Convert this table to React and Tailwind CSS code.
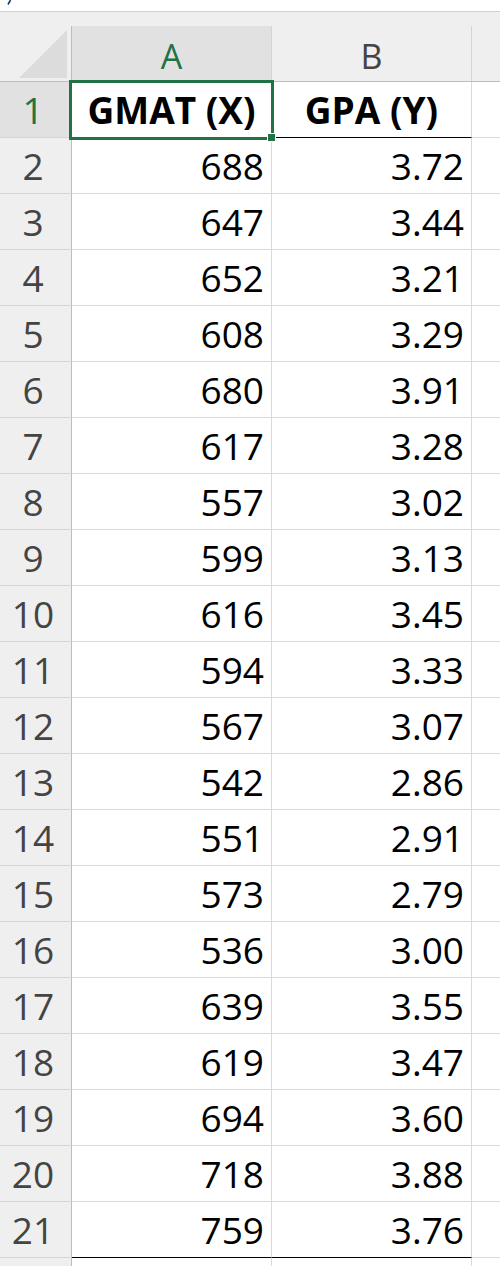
// Hoja de cálculo: GMAT vs GPA
import React from 'react';

const rows = [
  ['688', '3.72'],
  ['647', '3.44'],
  ['652', '3.21'],
  ['608', '3.29'],
  ['680', '3.91'],
  ['617', '3.28'],
  ['557', '3.02'],
  ['599', '3.13'],
  ['616', '3.45'],
  ['594', '3.33'],
  ['567', '3.07'],
  ['542', '2.86'],
  ['551', '2.91'],
  ['573', '2.79'],
  ['536', '3.00'],
  ['639', '3.55'],
  ['619', '3.47'],
  ['694', '3.60'],
  ['718', '3.88'],
  ['759', '3.76'],
];

const font = { fontFamily: '"Open Sans", "Liberation Sans", sans-serif' };

function RowHeader({ n, active }) {
  return (
    <div
      className={
        'w-[72px] shrink-0 flex items-center justify-center pr-[5px] border-r border-r-[#bdbdbd] border-b border-b-[#d4d4d4] text-[37px] leading-none ' +
        (active ? 'bg-[#e1e1e1] text-[#217346]' : 'bg-[#efefef] text-[#444444]')
      }
    >
      {n}
    </div>
  );
}

export default function App() {
  return (
    <div className="w-[500px] h-[1266px] bg-white overflow-hidden" style={font}>
      {/* Resto de la barra de fórmulas */}
      <div className="h-[12px] border-b border-[#d0d0d0] bg-white">
        <svg width="12" height="11" className="ml-[3px]">
          <line x1="5" y1="4.5" x2="7.5" y2="0" stroke="#1a3a6a" strokeWidth="1.6" />
        </svg>
      </div>

      {/* Cabecera de columnas */}
      <div className="h-[70px] flex flex-col bg-[#efefef] border-b border-[#bdbdbd]">
        <div className="h-[14px]" />
        <div className="flex flex-1">
          <div className="w-[72px] shrink-0 border-r border-[#bdbdbd] flex items-end justify-end pr-[3px] pb-[3px]">
            <svg width="49" height="48">
              <polygon points="48,0 48,48 0,48" fill="#dcdcdc" />
            </svg>
          </div>
          <div className="w-[200px] shrink-0 border-r border-[#d4d4d4] bg-[#e1e1e1] flex items-center justify-center pt-[5px] text-[34px] leading-none text-[#217346]">
            A
          </div>
          <div className="w-[200px] shrink-0 border-r border-[#d4d4d4] flex items-center justify-center pt-[5px] text-[34px] leading-none text-[#444444]">
            B
          </div>
          <div className="flex-1" />
        </div>
      </div>

      {/* Fila 1: encabezados */}
      <div className="h-[56px] flex">
        <RowHeader n={1} active />
        <div className="relative w-[200px] shrink-0 border-r border-r-[#dadada] border-b border-b-[#dadada] flex items-center justify-center text-[37px] font-bold leading-none text-black">
          GMAT (X)
          <div className="absolute -left-[3px] -top-[2px] w-[205px] h-[60px] border-[3px] border-[#217346] z-10" />
          <div className="absolute left-[195px] top-[51px] w-[9px] h-[9px] bg-[#217346] border border-white z-20" />
        </div>
        <div className="w-[200px] shrink-0 border-r border-r-[#dadada] border-b border-b-black flex items-center justify-center text-[37px] font-bold leading-none text-black">
          GPA (Y)
        </div>
        <div className="flex-1 border-b border-[#dadada]" />
      </div>

      {/* Datos */}
      {rows.map(([x, y], i) => {
        const last = i === rows.length - 1;
        const bottom = last ? 'border-b-black' : 'border-b-[#dadada]';
        return (
          <div key={i} className="h-[56px] flex">
            <RowHeader n={i + 2} />
            <div
              className={
                'w-[200px] shrink-0 border-r border-r-[#dadada] border-b flex items-center justify-end pr-[7px] text-[37px] leading-none text-black ' +
                bottom
              }
            >
              {x}
            </div>
            <div
              className={
                'w-[200px] shrink-0 border-r border-r-[#dadada] border-b flex items-center justify-end pr-[7px] text-[37px] leading-none text-black ' +
                bottom
              }
            >
              {y}
            </div>
            <div className="flex-1 border-b border-[#dadada]" />
          </div>
        );
      })}

      {/* Fila vacía inferior */}
      <div className="h-[56px] flex">
        <RowHeader n="" />
        <div className="w-[200px] shrink-0 border-r border-[#dadada]" />
        <div className="w-[200px] shrink-0 border-r border-[#dadada]" />
        <div className="flex-1" />
      </div>
    </div>
  );
}
